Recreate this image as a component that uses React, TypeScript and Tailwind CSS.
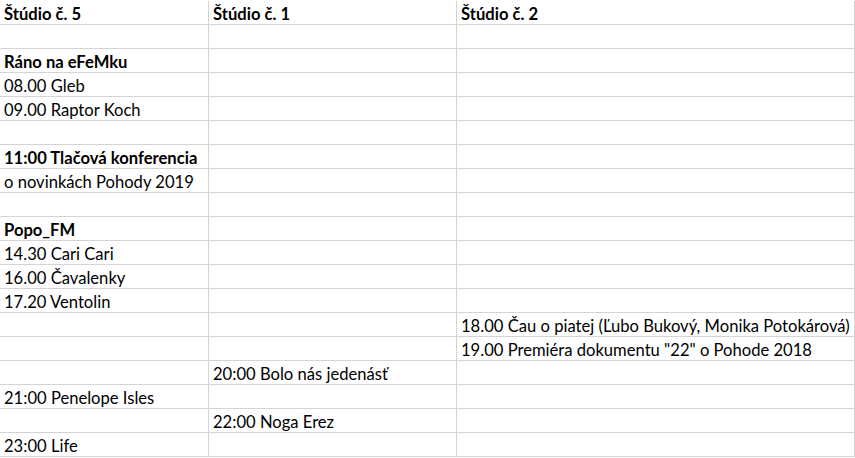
import React from 'react';

type Row = { a?: string; b?: string; c?: string; bold?: boolean };

const rows: Row[] = [
  { a: 'Štúdio č. 5', b: 'Štúdio č. 1', c: 'Štúdio č. 2', bold: true },
  {},
  { a: 'Ráno na eFeMku', bold: true },
  { a: '08.00 Gleb' },
  { a: '09.00 Raptor Koch' },
  {},
  { a: '11:00 Tlačová konferencia', bold: true },
  { a: 'o novinkách Pohody 2019' },
  {},
  { a: 'Popo_FM', bold: true },
  { a: '14.30 Cari Cari' },
  { a: '16.00 Čavalenky' },
  { a: '17.20 Ventolin' },
  { c: '18.00 Čau o piatej (Ľubo Bukový, Monika Potokárová)' },
  { c: '19.00 Premiéra dokumentu "22" o Pohode 2018' },
  { b: '20:00 Bolo nás jedenásť' },
  { a: '21:00 Penelope Isles' },
  { b: '22:00 Noga Erez' },
  { a: '23:00 Life' },
];

const Cell: React.FC<{ text?: string; bold?: boolean; width: string }> = ({ text, bold, width }) => (
  <div
    className={`${width} h-[24px] shrink-0 border-r border-b border-[#d4d4d4] pl-[4px] flex items-end overflow-visible whitespace-nowrap ${
      bold ? 'font-bold' : ''
    }`}
  >
    {text}
  </div>
);

export default function App() {
  return (
    <div
      className="w-[855px] h-[458px] bg-white pt-px overflow-hidden text-black text-[16.6px] leading-[19px]"
      style={{ fontFamily: 'Lato, "Liberation Sans", sans-serif' }}
    >
      {rows.map((r, i) => (
        <div key={i} className="flex">
          <Cell text={r.a} bold={r.bold} width="w-[209px]" />
          <Cell text={r.b} bold={r.bold} width="w-[248px]" />
          <Cell text={r.c} bold={r.bold} width="w-[398px]" />
        </div>
      ))}
    </div>
  );
}
